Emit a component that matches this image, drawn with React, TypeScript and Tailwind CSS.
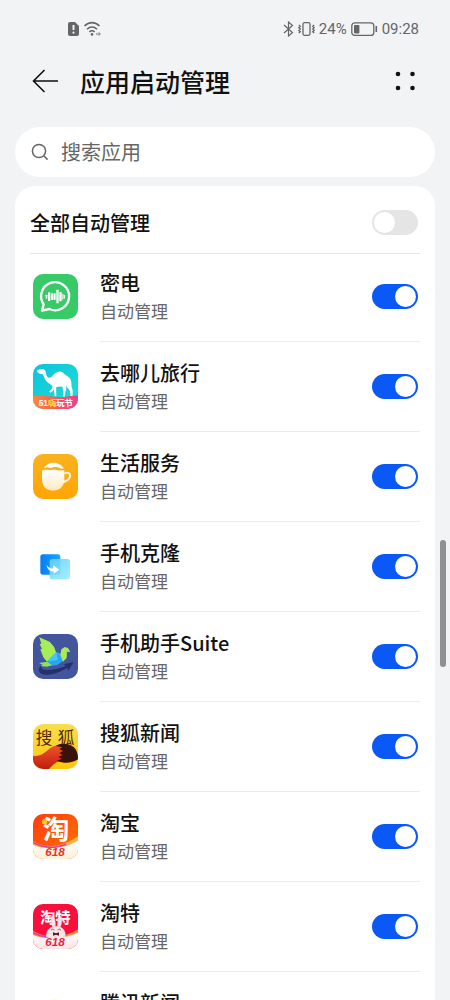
import React, { useState } from "react";

// --- Types ---
interface AppEntry {
  id: string;
  name: string;
  icon: React.ReactNode;
}

interface IconTileProps {
  children: React.ReactNode;
}

// --- App icons ---
const IconTile = ({ children }: IconTileProps) => (
  <svg
    viewBox="0 0 135 135"
    className="mb-0.5 size-[45px] shrink-0 rounded-[10px] font-['Liberation_Sans','Noto_Sans_CJK_SC',sans-serif]"
    aria-hidden="true"
  >
    {children}
  </svg>
);

const MidianIcon = () => (
  <IconTile>
    <rect width="135" height="135" fill="#37cb68" />
    <path
      d="M27 110 L32 91 A42 42 0 1 1 49 105 Z"
      fill="none"
      stroke="#fff"
      strokeWidth="7"
      strokeLinejoin="round"
    />
    <g fill="#fff">
      <rect x="38" y="62" width="5" height="12" rx="2" />
      <rect x="45" y="55" width="7" height="26" rx="2" />
      <rect x="54" y="58" width="7" height="20" rx="2" />
      <rect x="62" y="58" width="6" height="20" rx="2" />
      <rect x="70" y="47" width="7" height="41" rx="2" />
      <rect x="79" y="54" width="7" height="28" rx="2" />
      <rect x="88" y="59" width="3" height="18" rx="1" />
      <rect x="92" y="62" width="4" height="12" rx="2" />
    </g>
  </IconTile>
);

const CamelIcon = () => (
  <IconTile>
    <defs>
      <linearGradient id="camelSky" x1="0" y1="0" x2="1" y2="1">
        <stop offset="0" stopColor="#0cc3dc" />
        <stop offset="1" stopColor="#22dfd5" />
      </linearGradient>
      <linearGradient id="camelBand" x1="0" y1="0" x2="1" y2="0">
        <stop offset="0" stopColor="#ff8a3c" />
        <stop offset="0.5" stopColor="#fb5a50" />
        <stop offset="1" stopColor="#f03c96" />
      </linearGradient>
    </defs>
    <rect width="135" height="135" fill="url(#camelSky)" />
    <path
      d="M13 19 C18 15 24 17 28 15 C31 15 34 17 37 20 C39 27 39 35 45 40 C50 44 56 40 60 34 C65 27 71 24 78 23 C84 21 90 25 95 31 C101 37 109 38 113 47 C117 56 114 64 117 72 C121 80 118 88 119 98 L113 98 C112 90 113 83 109 78 C104 72 101 69 100 64 C99 72 101 76 97 84 L95 98 L90 98 C90 88 92 79 88 68 C82 66 76 68 70 69 C69 76 70 82 70 97 L65 97 C64 87 64 82 62 76 C60 82 55 84 53 86 L49 82 C55 78 59 75 58 66 C52 60 43 57 38 49 C33 42 33 34 28 30 C23 31 17 28 12 23 Z"
      fill="#fff"
    />
    <path d="M0 97 C35 92 60 101 90 99 C110 98 125 94 135 95 V135 H0 Z" fill="url(#camelBand)" />
    <text x="17" y="126" fontSize="25" fontWeight="700" fill="#fff">
      51
      <tspan fill="#ffe23d">嗨</tspan>
      玩节
    </text>
  </IconTile>
);

const CupIcon = () => (
  <IconTile>
    <defs>
      <linearGradient id="cupBg" x1="0" y1="0" x2="0" y2="1">
        <stop offset="0" stopColor="#f9b21e" />
        <stop offset="1" stopColor="#ffa503" />
      </linearGradient>
      <linearGradient id="cupBody" x1="0" y1="0" x2="0" y2="1">
        <stop offset="0" stopColor="#fff" />
        <stop offset="1" stopColor="#ffeac0" />
      </linearGradient>
    </defs>
    <rect width="135" height="135" fill="url(#cupBg)" />
    <path d="M32 43 C38 32 50 26 62 26 C76 26 88 34 92 43 C84 46 79 41 72 39 C63 36 58 45 48 41 C41 38 38 42 32 43 Z" fill="#fff" />
    <path
      d="M27 53 C27 49 29 48 33 48 C41 46 49 49 56 48 C67 45 78 51 94 49 V76 C94 96 82 110 60 110 C39 110 27 96 27 76 Z"
      fill="url(#cupBody)"
    />
    <path d="M94 59 C104 53 113 58 111 67 C110 75 100 81 92 84" fill="none" stroke="#fff6e0" strokeWidth="6" />
  </IconTile>
);

const CloneIcon = () => (
  <IconTile>
    <defs>
      <linearGradient id="cloneBack" x1="0" y1="0" x2="1" y2="0">
        <stop offset="0" stopColor="#087cf7" />
        <stop offset="1" stopColor="#14aafd" />
      </linearGradient>
      <linearGradient id="cloneFront" x1="0" y1="0" x2="1" y2="1">
        <stop offset="0" stopColor="#63cdfd" />
        <stop offset="1" stopColor="#9beffe" />
      </linearGradient>
    </defs>
    <rect width="135" height="135" fill="#fff" />
    <rect x="22" y="31" width="60" height="61" rx="8" fill="url(#cloneBack)" />
    <rect x="50" y="45" width="61" height="61" rx="8" fill="url(#cloneFront)" opacity="0.9" />
    <path d="M41 62 C46 71 53 74 61 73 L60 63 L79 77 L62 89 L62 82 C50 83 42 74 41 62 Z" fill="#fff" />
  </IconTile>
);

const BirdIcon = () => (
  <IconTile>
    <rect width="135" height="135" fill="#43559d" />
    <path
      d="M26 93 C22 103 28 107 41 108 C63 108 83 102 99 95 L91 91 L122 84 L106 110 L103 101 C82 114 56 124 34 122 C14 119 13 103 26 93 Z"
      fill="#25316f"
    />
    <path d="M19 10 L50 23 L63 38 L70 57 L42 83 L31 70 L25 54 L22 46 L27 45 L20 30 L25 29 Z" fill="#a6ee55" />
    <path d="M42 83 L70 54 L85 59 L91 80 L72 94 L48 95 Z" fill="#2ba5ef" />
    <path d="M42 83 L70 54 L74 77 Z" fill="#4cc4f5" />
    <path d="M82 62 L85 46 L95 39 L105 42 L112 54 L102 53 L101 72 L90 83 Z" fill="#a8eb55" />
    <path d="M18 87 L42 83 L57 94 L42 98 L23 96 L29 92 Z" fill="#8fe25a" />
  </IconTile>
);

const FoxIcon = () => (
  <IconTile>
    <defs>
      <linearGradient id="foxBg" x1="0" y1="0" x2="0" y2="1">
        <stop offset="0" stopColor="#f6df50" />
        <stop offset="1" stopColor="#fdc50a" />
      </linearGradient>
      <linearGradient id="foxTail" x1="0" y1="0" x2="0" y2="1">
        <stop offset="0" stopColor="#f0542c" />
        <stop offset="1" stopColor="#bf1d0d" />
      </linearGradient>
    </defs>
    <rect width="135" height="135" fill="url(#foxBg)" />
    <text x="8" y="59" fontSize="50" fill="#51290a">
      搜
    </text>
    <text x="74" y="59" fontSize="50" fill="#51290a">
      狐
    </text>
    <path
      d="M0 95 C18 98 32 90 45 78 C58 66 70 62 90 63 L100 80 L84 112 C72 111 60 122 48 135 H10 C4 135 0 130 0 125 Z"
      fill="url(#foxTail)"
    />
    <path
      d="M68 66 C82 56 108 56 123 70 C132 79 135 90 135 106 C118 117 94 120 72 110 L87 104 L76 99 L89 93 L79 87 L90 81 L79 75 L88 70 Z"
      fill="#391307"
    />
  </IconTile>
);

const TaobaoIcon = () => (
  <IconTile>
    <defs>
      <linearGradient id="taobaoBg" x1="0" y1="0" x2="1" y2="1">
        <stop offset="0" stopColor="#ff3c10" />
        <stop offset="1" stopColor="#ff7600" />
      </linearGradient>
      <linearGradient id="taobaoBase" x1="0" y1="0" x2="0" y2="1">
        <stop offset="0" stopColor="#fff" />
        <stop offset="1" stopColor="#fdf0d9" />
      </linearGradient>
    </defs>
    <rect width="135" height="135" fill="url(#taobaoBg)" />
    <path d="M0 82 C35 104 85 102 135 66 V135 H0 Z" fill="#ffb347" />
    <path d="M0 86 C35 103 70 104 100 91" fill="none" stroke="#dd3bb1" strokeWidth="5" />
    <path d="M0 93 C38 108 88 107 135 80 V135 H0 Z" fill="url(#taobaoBase)" />
    <text x="29" y="76" fontSize="80" fontWeight="700" fill="#fff">
      淘
    </text>
    <circle cx="35" cy="23" r="8" fill="#ffc928" />
    <text x="66" y="127" fontSize="35" fontStyle="italic" fontWeight="700" textAnchor="middle" fill="#ec3120">
      618
    </text>
  </IconTile>
);

const TaoteIcon = () => (
  <IconTile>
    <defs>
      <linearGradient id="taoteBase" x1="0" y1="0" x2="0" y2="1">
        <stop offset="0" stopColor="#fff" />
        <stop offset="1" stopColor="#fce3e7" />
      </linearGradient>
    </defs>
    <rect width="135" height="135" fill="#fb0e3c" />
    <text x="21" y="56" fontSize="46" fontWeight="700" fill="#fff">
      淘特
    </text>
    <path d="M0 80 C35 103 90 105 135 76 V135 H0 Z" fill="#ff8a3c" />
    <path d="M0 86 C35 103 70 104 100 93" fill="none" stroke="#d43fc0" strokeWidth="5" />
    <g fill="#f3e6e6" stroke="#dfc3c6" strokeWidth="1">
      <ellipse cx="61" cy="55" rx="6" ry="19" transform="rotate(-8 61 55)" />
      <ellipse cx="80" cy="55" rx="6" ry="19" transform="rotate(10 80 55)" />
      <path d="M40 98 C38 78 52 67 70 67 C88 67 99 80 97 98 C80 106 56 106 40 98 Z" />
    </g>
    <path d="M54 78 q5 -5 10 0 M74 78 q5 -5 10 0" fill="none" stroke="#5b3434" strokeWidth="2" />
    <path d="M0 93 C38 107 88 107 135 86 V135 H0 Z" fill="url(#taoteBase)" />
    <path d="M60 85 L69 88 L78 85 V95 L69 92 L60 95 Z" fill="#611820" />
    <text x="66" y="127" fontSize="35" fontStyle="italic" fontWeight="700" textAnchor="middle" fill="#e61e43">
      618
    </text>
  </IconTile>
);

const TencentNewsIcon = () => (
  <IconTile>
    <rect width="135" height="135" fill="#fff" />
    <path d="M43 23 A48 48 0 0 1 112 50 L67 64 Z" fill="#fff04d" />
    <path d="M112 50 A48 48 0 0 1 67 112 L67 64 Z" fill="#1ec6a0" />
    <path d="M67 112 A48 48 0 0 1 43 23 L67 64 Z" fill="#1d8df5" />
  </IconTile>
);

// --- Status bar ---
const StatusBar = () => (
  <div className="flex h-[58px] shrink-0 items-center justify-between pr-[31px] pl-[67px] text-[#666]">
    <div className="flex items-center gap-1">
      <svg width="13" height="16" viewBox="0 0 13 16" aria-label="SIM">
        <path d="M3 1 H8 L12 5 V13 Q12 15 10 15 H3 Q1 15 1 13 V3 Q1 1 3 1 Z" fill="currentColor" />
        <path d="M6.5 4 V9" stroke="#f1f3f5" strokeWidth="2" />
        <circle cx="6.5" cy="11.7" r="1.1" fill="#f1f3f5" />
      </svg>
      <svg width="18" height="16" viewBox="0 0 18 16" fill="none" stroke="currentColor" strokeWidth="1.6" aria-label="Wi-Fi">
        <path d="M0.5 5 C5 0.5 11 0.5 15.5 5" />
        <path d="M3 8.2 C6 5.2 10 5.2 13 8.2" />
        <path d="M5.4 11 C7 9.4 9 9.4 10.6 11" />
        <circle cx="8" cy="13.4" r="1.3" fill="currentColor" stroke="none" />
        <path d="M14.5 11 L17 13 L14.5 15 Z M13.5 11.5 L11.8 13 L13.5 14.5 Z" fill="currentColor" stroke="none" opacity="0.8" />
      </svg>
    </div>
    <div className="flex items-center gap-1">
      <svg width="11" height="16" viewBox="0 0 11 16" fill="none" stroke="currentColor" strokeWidth="1.2" aria-label="Bluetooth">
        <path d="M1 4 L9.5 11.5 L5.5 15 V1 L9.5 4.5 L1 12" />
      </svg>
      <svg width="17" height="16" viewBox="0 0 17 16" fill="none" stroke="currentColor" strokeWidth="1.3" aria-label="Vibrate">
        <rect x="5" y="1.7" width="7" height="12.6" rx="1.5" />
        <path d="M0.8 4 L2.3 5.3 L0.8 6.7 L2.3 8 L0.8 9.3 L2.3 10.7 L0.8 12" />
        <path d="M16.2 4 L14.7 5.3 L16.2 6.7 L14.7 8 L16.2 9.3 L14.7 10.7 L16.2 12" />
      </svg>
      <span className="font-[Roboto,sans-serif] text-[15px] leading-4">24%</span>
      <svg width="27" height="16" viewBox="0 0 27 16" fill="none" stroke="currentColor" aria-label="Battery">
        <rect x="0.8" y="1.8" width="22" height="12.6" rx="3" strokeWidth="1.3" />
        <rect x="3" y="4" width="5.4" height="8.4" rx="0.8" fill="currentColor" stroke="none" />
        <path d="M25.3 5 V11" strokeWidth="1.6" />
      </svg>
      <span className="font-[Roboto,sans-serif] text-[15px] leading-4">09:28</span>
    </div>
  </div>
);

// --- Switch ---
interface SwitchProps {
  id: string;
  checked: boolean;
  onChange: () => void;
}

const Switch = ({ id, checked, onChange }: SwitchProps) => (
  <input
    id={id}
    type="checkbox"
    role="switch"
    checked={checked}
    onChange={onChange}
    className="flex h-[25px] w-[46px] shrink-0 cursor-pointer appearance-none items-center rounded-full bg-[#e5e5e5] px-0.5 before:size-[21px] before:rounded-full before:bg-white before:transition-transform checked:bg-[#0a59f7] checked:before:translate-x-[21px]"
  />
);

const apps: AppEntry[] = [
  { id: "midian", name: "密电", icon: <MidianIcon /> },
  { id: "qunar", name: "去哪儿旅行", icon: <CamelIcon /> },
  { id: "life", name: "生活服务", icon: <CupIcon /> },
  { id: "clone", name: "手机克隆", icon: <CloneIcon /> },
  { id: "suite", name: "手机助手Suite", icon: <BirdIcon /> },
  { id: "sohu", name: "搜狐新闻", icon: <FoxIcon /> },
  { id: "taobao", name: "淘宝", icon: <TaobaoIcon /> },
  { id: "taote", name: "淘特", icon: <TaoteIcon /> },
  { id: "tencent", name: "腾讯新闻", icon: <TencentNewsIcon /> },
];

// --- Main Screen ---
export default function App() {
  const [enabled, setEnabled] = useState<string[]>(apps.map((app) => app.id));
  const [allAuto, setAllAuto] = useState(false);

  const toggle = (id: string) =>
    setEnabled((list) => (list.includes(id) ? list.filter((item) => item !== id) : [...list, id]));

  return (
    <div className="relative flex h-screen flex-col overflow-hidden bg-[#f1f3f5] font-['Noto_Sans_CJK_SC',sans-serif] text-[#111]">
      <StatusBar />

      <header className="flex h-[46px] shrink-0 items-center pr-[34px] pl-8">
        <button type="button" aria-label="返回">
          <svg width="26" height="26" viewBox="0 0 26 26" fill="none" stroke="currentColor" strokeWidth="1.6">
            <path d="M26 13 H1.5 M12.5 2 L1.5 13 L12.5 24" />
          </svg>
        </button>
        <h1 className="ml-[22px] flex-1 text-[25px] leading-8 font-medium">应用启动管理</h1>
        <button type="button" aria-label="更多">
          <svg width="22" height="22" viewBox="0 0 22 22" fill="currentColor">
            <circle cx="4" cy="4" r="2.3" />
            <circle cx="18.5" cy="4" r="2.3" />
            <circle cx="4" cy="18" r="2.3" />
            <circle cx="18.5" cy="18" r="2.3" />
          </svg>
        </button>
      </header>

      <label className="mx-[15px] mt-[23px] flex h-[50px] shrink-0 items-center gap-3 rounded-full bg-white px-4 text-[#666]">
        <svg width="18" height="18" viewBox="0 0 18 18" fill="none" stroke="currentColor" strokeWidth="1.5" className="shrink-0">
          <circle cx="8" cy="8" r="6.6" />
          <path d="M13 13 L16.6 16.6" />
        </svg>
        <input
          type="search"
          placeholder="搜索应用"
          aria-label="搜索应用"
          className="min-w-0 flex-1 bg-transparent text-xl leading-7 outline-none placeholder:text-[#666]"
        />
      </label>

      <main className="mx-[15px] mt-[9px] shrink-0 rounded-t-[20px] bg-white">
        <div className="mx-[15px] flex h-[68px] items-center justify-between border-b border-[#e5e5e5] pt-1.5 pr-0.5">
          <label htmlFor="all-auto" className="text-xl leading-7 font-medium">
            全部自动管理
          </label>
          <Switch id="all-auto" checked={allAuto} onChange={() => setAllAuto(!allAuto)} />
        </div>

        <ul className="-mt-0.5">
          {apps.map((app) => (
            <li key={app.id} className="flex h-[90px] items-center pl-[18px]">
              {app.icon}
              <div className="mr-[15px] ml-[22px] flex h-full flex-1 items-center justify-between border-b border-[#ebebeb] pr-0.5">
                <label htmlFor={app.id} className="flex flex-col">
                  <span className="text-xl leading-7 font-medium">{app.name}</span>
                  <span className="text-[17px] leading-7 text-[#666]">自动管理</span>
                </label>
                <Switch id={app.id} checked={enabled.includes(app.id)} onChange={() => toggle(app.id)} />
              </div>
            </li>
          ))}
        </ul>
      </main>

      {/* Scroll position indicator */}
      <div className="absolute top-[540px] right-1 h-[127px] w-1.5 rounded-full bg-[#8f9092]" />
    </div>
  );
}
